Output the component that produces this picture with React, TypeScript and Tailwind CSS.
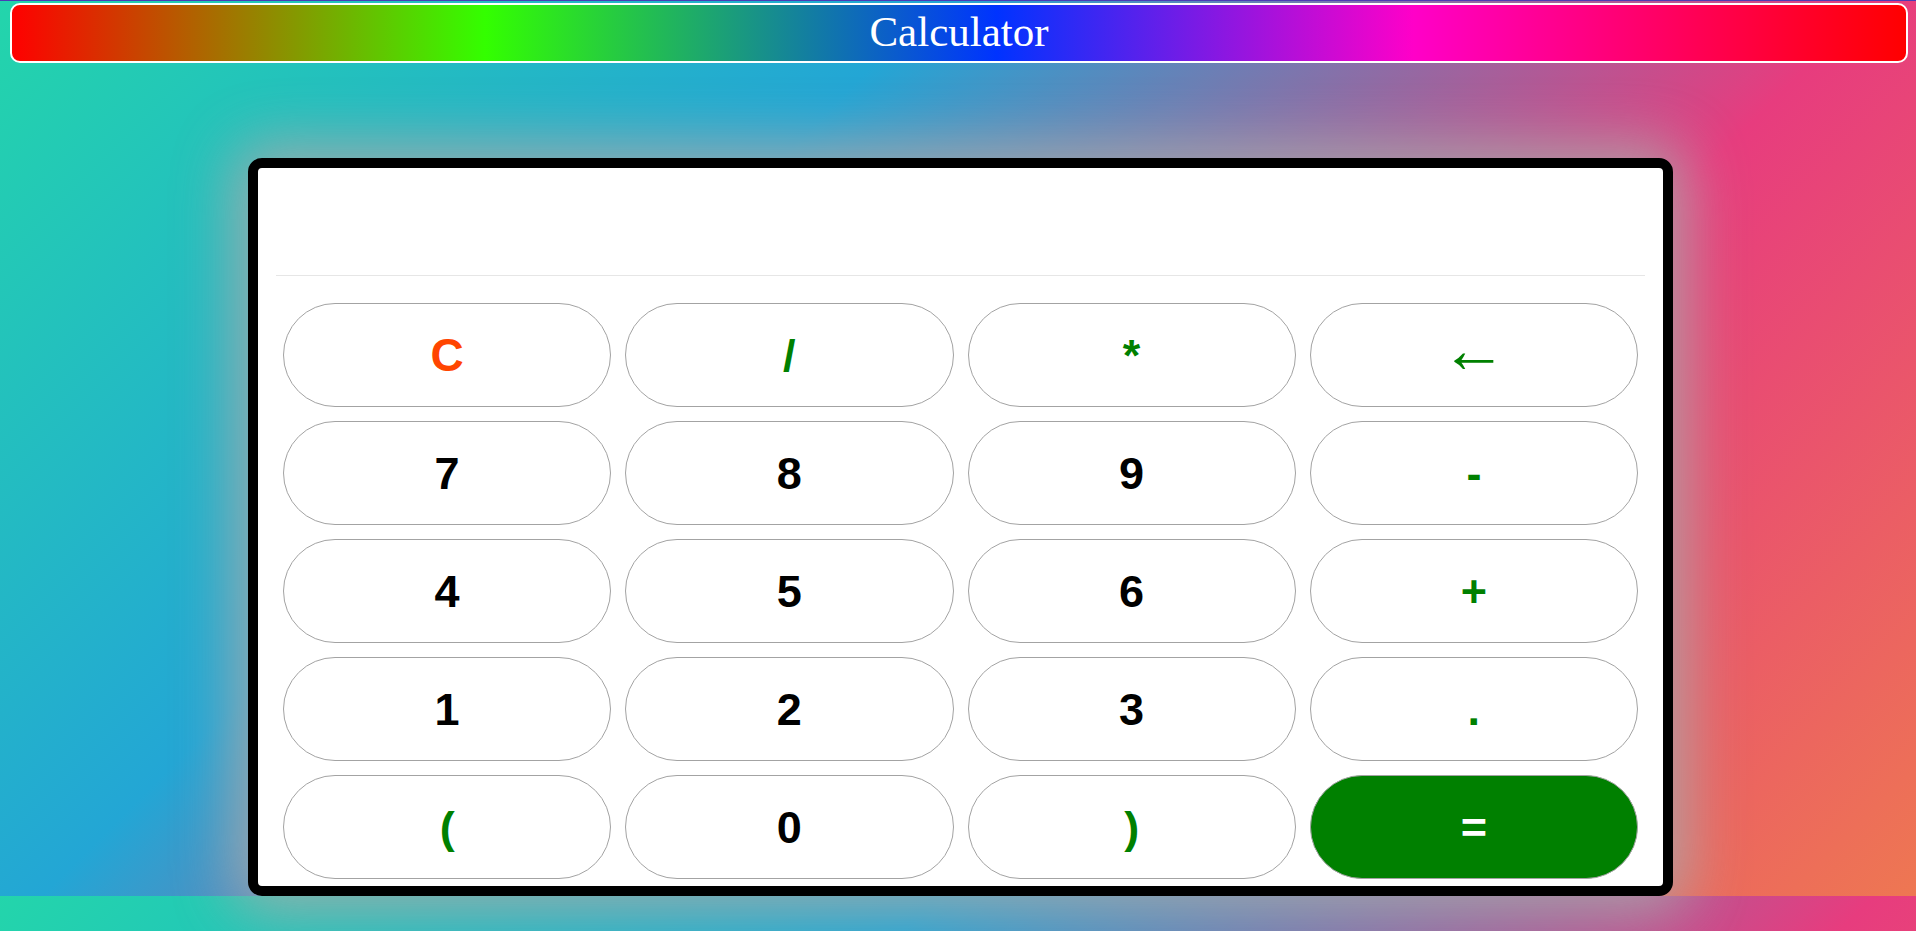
import React from "react";

type Key = { label: string; cls: string };

const keys: Key[] = [
  { label: "C", cls: "bg-white text-[#ff4500] font-black text-[46px]" },
  { label: "/", cls: "bg-white text-[#008000] font-bold text-[45px]" },
  { label: "*", cls: "bg-white text-[#008000] font-bold text-[45px]" },
  { label: "←", cls: "bg-white text-[#008000] font-normal text-[66px] pb-[12px]" },
  { label: "7", cls: "bg-white text-black font-bold text-[45px]" },
  { label: "8", cls: "bg-white text-black font-bold text-[45px]" },
  { label: "9", cls: "bg-white text-black font-bold text-[45px]" },
  { label: "-", cls: "bg-white text-[#008000] font-bold text-[45px]" },
  { label: "4", cls: "bg-white text-black font-bold text-[45px]" },
  { label: "5", cls: "bg-white text-black font-bold text-[45px]" },
  { label: "6", cls: "bg-white text-black font-bold text-[45px]" },
  { label: "+", cls: "bg-white text-[#008000] font-bold text-[45px]" },
  { label: "1", cls: "bg-white text-black font-bold text-[45px]" },
  { label: "2", cls: "bg-white text-black font-bold text-[45px]" },
  { label: "3", cls: "bg-white text-black font-bold text-[45px]" },
  { label: ".", cls: "bg-white text-[#008000] font-bold text-[45px]" },
  { label: "(", cls: "bg-white text-[#008000] font-bold text-[45px]" },
  { label: "0", cls: "bg-white text-black font-bold text-[45px]" },
  { label: ")", cls: "bg-white text-[#008000] font-bold text-[45px]" },
  { label: "=", cls: "bg-[#008000] text-white font-bold text-[45px]" },
];

export default function App() {
  return (
    <div className="h-[931px] w-full overflow-hidden bg-[linear-gradient(-45deg,#ee7752,#e73c7e,#23a6d5,#23d5ab)] bg-[length:100%_896px] bg-repeat">
      <div className="h-px bg-[#4b3cb4]" />
      <div className="flex flex-col pt-[2px]">
        <div className="ml-[10px] mr-[8px] h-[60px] rounded-[10px] border-2 border-white bg-[linear-gradient(to_right,#ff0000,#33ff00_25%,#0033ff_52%,#ff00c8_74%,#ff0000)] flex items-center justify-center">
          <h1 className="text-white text-[43px] leading-none font-['Georgia','Liberation_Serif',serif] -mt-[3px]">
            Calculator
          </h1>
        </div>

        <div className="ml-[248px] mt-[95px] w-[1425px] rounded-[14px] border-[10px] border-black bg-white shadow-[0_0_60px_15px_rgba(170,170,170,0.85)]">
          <div className="mx-[18px] h-[108px] border-b border-[#e6e6e6]" />
          <div className="grid grid-cols-4 gap-[14px] px-[25px] pt-[27px] pb-[7px]">
            {keys.map((k) => (
              <button
                key={k.label}
                className={`h-[104px] rounded-full border border-[#a3a3a3] flex items-center justify-center leading-none font-['Liberation_Sans',Arial,sans-serif] ${k.cls}`}
              >
                {k.label}
              </button>
            ))}
          </div>
        </div>
      </div>
    </div>
  );
}
